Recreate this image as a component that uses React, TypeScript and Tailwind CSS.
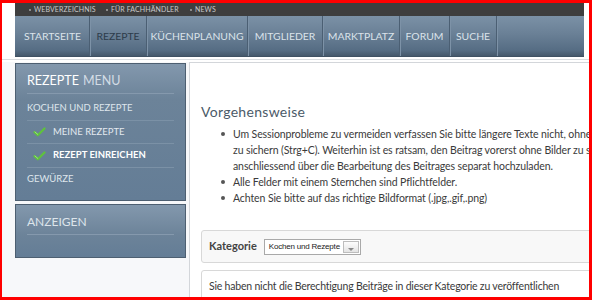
import React from "react";

const navItems: { label: string; w: string; active?: boolean }[] = [
  { label: "STARTSEITE", w: "w-[74px]" },
  { label: "REZEPTE", w: "w-[57px]", active: true },
  { label: "KÜCHENPLANUNG", w: "w-[101px]" },
  { label: "MITGLIEDER", w: "w-[75px]" },
  { label: "MARKTPLATZ", w: "w-[77px]" },
  { label: "FORUM", w: "w-[50px]" },
  { label: "SUCHE", w: "w-[47px]" },
];

function Check() {
  return (
    <svg width="13" height="10" viewBox="0 0 13 10" className="shrink-0">
      <path d="M1.5 5.2 L4.8 8.2 L11.5 1.5" fill="none" stroke="#5fc23d" strokeWidth="2.3" strokeLinecap="round" strokeLinejoin="round" />
      <path d="M2 5 L4.8 7.4" fill="none" stroke="#a6e88a" strokeWidth="0.8" strokeLinecap="round" />
    </svg>
  );
}

export default function App() {
  return (
    <div
      className="relative w-[592px] h-[300px] overflow-hidden bg-[#f7f8fa] border-solid border-[#ff0000] border-t-[3px] border-l-2 border-r-[3px] border-b-[3px]"
      style={{ fontFamily: "Lato, 'Open Sans', sans-serif" }}
    >
      {/* header */}
      <div className="pl-[13px] bg-white">
        <div className="w-[569px]">
          <div className="h-[13px] bg-[#3e3e3e] flex items-center text-[7px] leading-none text-[#c9c9c9] tracking-[0.1px]">
            <div className="ml-[14px] w-[77px] flex items-center gap-[3px]">
              <span className="w-[2px] h-[2px] bg-[#8a8a8a]" />
              <span>WEBVERZEICHNIS</span>
            </div>
            <div className="w-[84px] flex items-center gap-[3px]">
              <span className="w-[2px] h-[2px] bg-[#8a8a8a]" />
              <span>FÜR FACHHÄNDLER</span>
            </div>
            <div className="flex items-center gap-[3px]">
              <span className="w-[2px] h-[2px] bg-[#8a8a8a]" />
              <span>NEWS</span>
            </div>
          </div>
          <div className="h-[41px] flex pl-[1px] bg-[linear-gradient(#7b91a6,#6a8096_45%,#566d84_85%,#45586b)] border-b border-[#3f5163]">
            {navItems.map((it) => (
              <div
                key={it.label}
                className={`${it.w} h-full flex items-center justify-center border-r border-[#4b5f73] shadow-[1px_0_0_#7d92a7] text-[10.4px] leading-none ${it.active ? "text-[#2d3c4b]" : "text-[#dbe3ea]"}`}
              >
                {it.label}
              </div>
            ))}
          </div>
        </div>
      </div>
      <div className="h-[5px] bg-white flex flex-col">
        <div className="h-[2px]" />
        <div className="h-[1px] bg-[#d9dcdf]" />
      </div>

      {/* content row */}
      <div className="flex pl-[13px] gap-[3px]">
        <div className="w-[171px] shrink-0 mt-[1px] flex flex-col gap-[3px]">
          <div className="h-[138px] border border-[#4d5f71] bg-[linear-gradient(#8398ad,#6c8399_35px,#647d96)] px-[11px] flex flex-col">
            <div className="h-[30px] flex items-end pb-[4px] border-b border-[#8599ad] text-[12.5px] leading-[16px]">
              <span className="text-white">REZEPTE</span>
              <span className="text-[#d3dce5] ml-[4px]">MENU</span>
            </div>
            <div className="h-[27px] flex items-center pt-[3px] border-b border-[#7b91a6] text-[9.5px] text-[#dfe6ec]">
              KOCHEN UND REZEPTE
            </div>
            <div className="h-[23px] flex items-center pl-[6px] gap-[7px] border-b border-[#7b91a6] text-[9.5px] text-[#e3e9ef]">
              <Check />
              <span>MEINE REZEPTE</span>
            </div>
            <div className="h-[24px] flex items-center pl-[6px] gap-[7px] border-b border-[#7b91a6] text-[9.5px] font-bold text-white">
              <Check />
              <span>REZEPT EINREICHEN</span>
            </div>
            <div className="h-[22px] flex items-center text-[9.5px] text-[#dfe6ec]">GEWÜRZE</div>
          </div>
          <div className="h-[54px] border border-[#4d5f71] bg-[linear-gradient(#8398ad,#6c8399_30px,#647d96)] px-[11px]">
            <div className="h-[30px] flex items-end pb-[4px] border-b border-[#8599ad] text-[12px] leading-[16px] text-[#dde4eb]">
              ANZEIGEN
            </div>
          </div>
        </div>

        <div className="w-[520px] shrink-0 h-[240px] bg-white border-l border-t border-[#d3d6da] pl-[11px] pt-[39px]">
          <div className="text-[14px] leading-[20px] text-[#4b5a68] tracking-[0.3px]">Vorgehensweise</div>
          <ul className="mt-[4px] pl-[20px] text-[10.5px] leading-[16px] text-[#3a3a3a] whitespace-nowrap tracking-[-0.1px]">
            <li className="relative pl-[12px]">
              <span className="absolute left-[0px] top-[6px] w-[4px] h-[4px] rounded-full bg-[#555]" />
              Um Sessionprobleme zu vermeiden verfassen Sie bitte längere Texte nicht, ohne diese vorher
              <br />
              zu sichern (Strg+C). Weiterhin ist es ratsam, den Beitrag vorerst ohne Bilder zu speichern und diese
              <br />
              anschliessend über die Bearbeitung des Beitrages separat hochzuladen.
            </li>
            <li className="relative pl-[12px]">
              <span className="absolute left-[0px] top-[6px] w-[4px] h-[4px] rounded-full bg-[#555]" />
              Alle Felder mit einem Sternchen sind Pflichtfelder.
            </li>
            <li className="relative pl-[12px]">
              <span className="absolute left-[0px] top-[6px] w-[4px] h-[4px] rounded-full bg-[#555]" />
              Achten Sie bitte auf das richtige Bildformat (.jpg,.gif,.png)
            </li>
          </ul>

          <div className="mt-[24px] h-[33px] rounded-[3px] border border-[#d8d8d8] bg-[#f8f8f8] flex items-center pl-[7px] gap-[7px]">
            <span className="text-[11px] font-bold text-[#444]">Kategorie</span>
            <div className="w-[97px] h-[16px] bg-white border border-[#a9a9a9] flex items-center justify-between pl-[4px]">
              <span className="text-[8px] leading-none text-[#222] tracking-[-0.2px]" style={{ fontFamily: "'Liberation Sans', Arial, sans-serif" }}>
                Kochen und Rezepte
              </span>
              <div className="w-[16px] h-[12px] mr-[1px] border border-[#bdbdbd] bg-[linear-gradient(#fdfdfd,#e4e4e4)] flex items-end justify-center pb-[1px]">
                <span className="w-0 h-0 border-l-[3px] border-r-[3px] border-t-[3px] border-l-transparent border-r-transparent border-t-[#888]" />
              </div>
            </div>
          </div>

          <div className="mt-[7px] h-[40px] rounded-[3px] border border-[#d8d8d8] bg-white pl-[7px] pt-[7px] text-[10.5px] leading-[16px] text-[#3a3a3a] whitespace-nowrap tracking-[-0.2px]">
            Sie haben nicht die Berechtigung Beiträge in dieser Kategorie zu veröffentlichen
          </div>
        </div>
      </div>
    </div>
  );
}
